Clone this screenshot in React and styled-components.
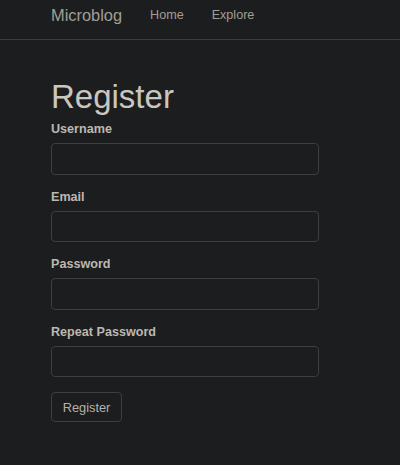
import React from "react";
import { createGlobalStyle, styled } from "styled-components";

const GlobalStyle = createGlobalStyle`
  html, body {
    margin: 0;
    padding: 0;
    background: #1c1d1f;
  }
  body {
    font-family: "Liberation Sans", Arial, sans-serif;
    font-size: 12.6px;
    color: #c4c0b8;
    min-height: 465px;
  }
`;

const Navbar = styled.nav`
  display: flex;
  align-items: center;
  height: 39px;
  padding: 0 0 0 51px;
  border-bottom: 1px solid #3c3d3f;
  box-sizing: content-box;
`;

const Brand = styled.a`
  font-size: 16.4px;
  color: #a29e96;
  text-decoration: none;
  margin-right: 28px;
  padding-bottom: 9px;
`;

const NavLink = styled.a`
  font-size: 12.6px;
  color: #a29e96;
  text-decoration: none;
  margin-right: 28px;
  padding-bottom: 10px;
`;

const Container = styled.main`
  padding: 39px 0 0 51px;
  width: 268px;
`;

const Title = styled.h1`
  font-size: 33px;
  font-weight: 400;
  line-height: 1.1;
  margin: 0 0 4px;
  color: #cbc7bf;
`;

const Form = styled.form`
  display: flex;
  flex-direction: column;
`;

const Group = styled.div`
  display: flex;
  flex-direction: column;
  margin-bottom: 12px;
`;

const Label = styled.label`
  font-weight: 700;
  font-size: 12.6px;
  line-height: 20px;
  margin-bottom: 4px;
  color: #bcb8b1;
`;

const Input = styled.input`
  box-sizing: border-box;
  height: 31.5px;
  width: 100%;
  background: #1c1d1f;
  border: 1px solid #3d3e40;
  border-radius: 4px;
  color: #c4c0b8;
  padding: 0 10px;
  font: inherit;
  outline: none;
`;

const Button = styled.button`
  align-self: flex-start;
  box-sizing: border-box;
  margin-top: 3px;
  height: 30px;
  width: 71px;
  background: #1c1d1f;
  border: 1px solid #3d3e40;
  border-radius: 4px;
  color: #b5b1aa;
  font-family: "Liberation Sans", Arial, sans-serif;
  font-size: 12.8px;
  padding: 0;
`;

const fields = [
  { id: "username", label: "Username", type: "text" },
  { id: "email", label: "Email", type: "email" },
  { id: "password", label: "Password", type: "password" },
  { id: "password2", label: "Repeat Password", type: "password" },
];

export default function App() {
  return (
    <>
      <GlobalStyle />
      <Navbar>
        <Brand href="#">Microblog</Brand>
        <NavLink href="#">Home</NavLink>
        <NavLink href="#">Explore</NavLink>
      </Navbar>
      <Container>
        <Title>Register</Title>
        <Form onSubmit={(e) => e.preventDefault()}>
          {fields.map((f) => (
            <Group key={f.id}>
              <Label htmlFor={f.id}>{f.label}</Label>
              <Input id={f.id} type={f.type} />
            </Group>
          ))}
          <Button type="submit">Register</Button>
        </Form>
      </Container>
    </>
  );
}
